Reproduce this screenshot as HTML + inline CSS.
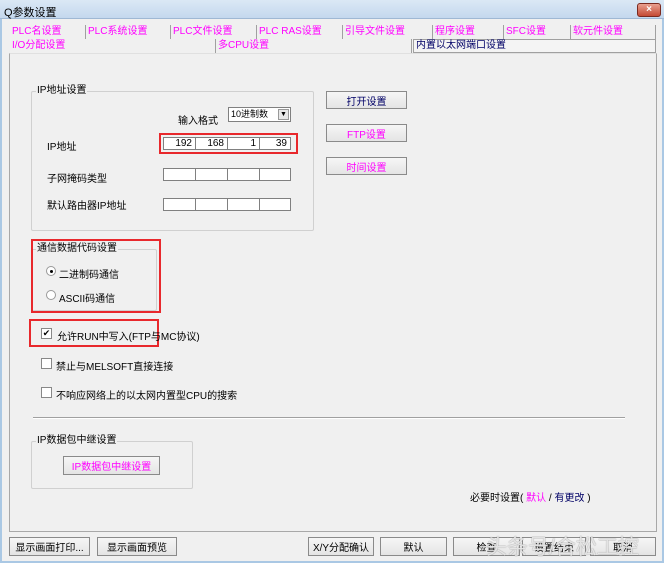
<!DOCTYPE html>
<html><head><meta charset="utf-8"><style>
*{margin:0;padding:0;box-sizing:border-box}
body{width:664px;height:563px;overflow:hidden;background:#f0f0f0;font-family:"Liberation Sans","Noto Sans CJK SC",sans-serif;font-size:10px;color:#000;position:relative}
.a{position:absolute;white-space:nowrap}
.win{position:absolute;left:0;top:0;width:664px;height:563px;border:2px solid #aac8e4;border-top:none}
.title{position:absolute;left:0;top:0;width:664px;height:19px;background:linear-gradient(#dbe8f5,#c4d8ee);border-bottom:1px solid #9fb8d4}
.tab{position:absolute;height:14px;color:#ff00ff;font-size:10px;line-height:14px;border-right:1px solid #a0a0a0;padding-left:2px}
.btn{position:absolute;background:linear-gradient(#f6f6f6,#e4e4e4);border:1px solid #8a8a8a;font-size:10px;display:flex;align-items:center;justify-content:center;white-space:nowrap}
.grp{position:absolute;border:1px solid #d0d0d0;border-radius:2px}
.grp span{position:absolute;left:4px;top:-7px;background:#f0f0f0;padding:0 1px;line-height:12px}
.cell{position:absolute;height:13px;background:#fff;border:1px solid #808080}
.red{position:absolute;border:2px solid #e8282c}
.cb{position:absolute;width:11px;height:11px;border:1px solid #888;background:#fff;font-size:9px;line-height:9px;text-align:center}
.rb{position:absolute;width:10px;height:10px;border:1px solid #999;border-radius:50%;background:#fff}
</style></head><body>
<div class="win"></div>
<div class="title"></div>
<div class="a" style="left:4px;top:4px;font-size:11px">Q参数设置</div>
<div class="a" style="left:637px;top:3px;width:24px;height:14px;background:linear-gradient(#e8a090,#c44a35);border:1px solid #7a2a20;border-radius:3px;color:#fff;text-align:center;font-size:10px;line-height:12px;font-weight:bold">×</div>

<div class="tab" style="left:10px;top:25px;width:76px">PLC名设置</div>
<div class="tab" style="left:86px;top:25px;width:85px">PLC系统设置</div>
<div class="tab" style="left:171px;top:25px;width:86px">PLC文件设置</div>
<div class="tab" style="left:257px;top:25px;width:86px">PLC RAS设置</div>
<div class="tab" style="left:343px;top:25px;width:90px">引导文件设置</div>
<div class="tab" style="left:433px;top:25px;width:71px">程序设置</div>
<div class="tab" style="left:504px;top:25px;width:67px">SFC设置</div>
<div class="tab" style="left:571px;top:25px;width:85px">软元件设置</div>
<div class="tab" style="left:10px;top:39px;width:206px">I/O分配设置</div>
<div class="tab" style="left:216px;top:39px;width:196px">多CPU设置</div>
<div class="a" style="left:413px;top:39px;width:243px;height:14px;border:1px solid #a0a0a0;background:#f4f4f4;color:#000066;padding-left:2px;line-height:12px">内置以太网端口设置</div>
<div class="a" style="left:9px;top:53px;width:648px;height:479px;border:1px solid #a8a8a8;border-top:1px solid #e0e0e0"></div>

<div class="grp" style="left:31px;top:91px;width:283px;height:140px"><span>IP地址设置</span></div>
<div class="a" style="left:178px;top:112px">输入格式</div>
<div class="a" style="left:228px;top:107px;width:63px;height:15px;background:#fff;border:1px solid #808080;padding-left:2px;line-height:13px;font-size:9px">10进制数<span style="position:absolute;right:1px;top:1px;width:11px;height:11px;background:#e8e8e8;border:1px solid #999;font-size:7px;line-height:9px;text-align:center">▼</span></div>
<div class="red" style="left:159px;top:133px;width:139px;height:21px"></div>
<div class="a" style="left:47px;top:138px">IP地址</div>
<div class="cell" style="left:163px;top:137px;width:33px;text-align:right;padding-right:3px;line-height:11px">192</div>
<div class="cell" style="left:195px;top:137px;width:33px;text-align:right;padding-right:3px;line-height:11px">168</div>
<div class="cell" style="left:227px;top:137px;width:33px;text-align:right;padding-right:3px;line-height:11px">1</div>
<div class="cell" style="left:259px;top:137px;width:32px;text-align:right;padding-right:3px;line-height:11px">39</div>
<div class="a" style="left:47px;top:170px">子网掩码类型</div>
<div class="cell" style="left:163px;top:168px;width:33px"></div><div class="cell" style="left:195px;top:168px;width:33px"></div><div class="cell" style="left:227px;top:168px;width:33px"></div><div class="cell" style="left:259px;top:168px;width:32px"></div>
<div class="a" style="left:47px;top:197px">默认路由器IP地址</div>
<div class="cell" style="left:163px;top:198px;width:33px"></div><div class="cell" style="left:195px;top:198px;width:33px"></div><div class="cell" style="left:227px;top:198px;width:33px"></div><div class="cell" style="left:259px;top:198px;width:32px"></div>

<div class="btn" style="left:326px;top:91px;width:81px;height:18px;color:#000066">打开设置</div>
<div class="btn" style="left:326px;top:124px;width:81px;height:18px;color:#ff00ff">FTP设置</div>
<div class="btn" style="left:326px;top:157px;width:81px;height:18px;color:#ff00ff">时间设置</div>

<div class="grp" style="left:31px;top:249px;width:126px;height:62px"><span>通信数据代码设置</span></div>
<div class="red" style="left:31px;top:239px;width:130px;height:74px"></div>
<div class="rb" style="left:46px;top:266px"><div style="position:absolute;left:3px;top:3px;width:3px;height:3px;background:#000;border-radius:50%"></div></div>
<div class="a" style="left:59px;top:266px">二进制码通信</div>
<div class="rb" style="left:46px;top:290px"></div>
<div class="a" style="left:59px;top:290px">ASCII码通信</div>

<div class="red" style="left:29px;top:319px;width:130px;height:28px"></div>
<div class="cb" style="left:41px;top:328px">✔</div>
<div class="a" style="left:57px;top:328px">允许RUN中写入(FTP与MC协议)</div>
<div class="cb" style="left:41px;top:358px"></div>
<div class="a" style="left:56px;top:358px">禁止与MELSOFT直接连接</div>
<div class="cb" style="left:41px;top:387px"></div>
<div class="a" style="left:56px;top:387px">不响应网络上的以太网内置型CPU的搜索</div>
<div class="a" style="left:33px;top:417px;width:592px;height:2px;border-top:1px solid #a0a0a0;border-bottom:1px solid #fff"></div>

<div class="grp" style="left:31px;top:441px;width:162px;height:48px"><span>IP数据包中继设置</span></div>
<div class="btn" style="left:63px;top:456px;width:97px;height:19px;color:#ff00ff">IP数据包中继设置</div>

<div class="a" style="left:470px;top:489px">必要时设置( <span style="color:#ff00ff">默认</span> / <span style="color:#000066">有更改</span> )</div>

<div class="btn" style="left:9px;top:537px;width:81px;height:19px">显示画面打印...</div>
<div class="btn" style="left:97px;top:537px;width:80px;height:19px">显示画面预览</div>
<div class="btn" style="left:308px;top:537px;width:66px;height:19px">X/Y分配确认</div>
<div class="btn" style="left:380px;top:537px;width:67px;height:19px">默认</div>
<div class="btn" style="left:453px;top:537px;width:67px;height:19px">检查</div>
<div class="btn" style="left:522px;top:537px;width:64px;height:19px">设置结束</div>
<div class="btn" style="left:590px;top:537px;width:66px;height:19px">取消</div>
<div class="a" style="left:486px;top:531px;font-size:21px;color:rgba(255,255,255,0.8);text-shadow:0 0 1px #666">头条号/合松工控</div>
</body></html>
